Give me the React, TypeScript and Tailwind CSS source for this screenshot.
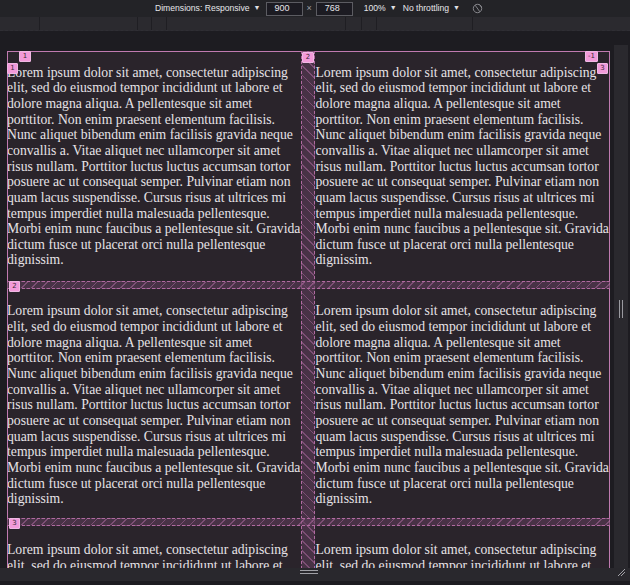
import React from 'react';

const lorem =
  'Lorem ipsum dolor sit amet, consectetur adipiscing elit, sed do eiusmod tempor incididunt ut labore et dolore magna aliqua. A pellentesque sit amet porttitor. Non enim praesent elementum facilisis. Nunc aliquet bibendum enim facilisis gravida neque convallis a. Vitae aliquet nec ullamcorper sit amet risus nullam. Porttitor luctus luctus accumsan tortor posuere ac ut consequat semper. Pulvinar etiam non quam lacus suspendisse. Cursus risus at ultrices mi tempus imperdiet nulla malesuada pellentesque. Morbi enim nunc faucibus a pellentesque sit. Gravida dictum fusce ut placerat orci nulla pellentesque dignissim.';

function Caret() {
  return <span className="ml-[4px] text-[7px] text-[#e0e0e4]">▼</span>;
}

function Label({ text, cls }: { text: string; cls: string }) {
  return (
    <div
      className={`absolute z-20 flex h-[11px] items-center justify-center rounded-[1px] border border-[#f0b8e4] bg-[#f29ad9] px-[2px] font-['DejaVu_Sans',sans-serif] text-[7px] leading-none text-[#3a2a36] ${cls}`}
    >
      {text}
    </div>
  );
}

export default function App() {
  const rulerStops = [39, 137, 151, 166, 345, 361, 376, 472];
  return (
    <div className="relative h-[585px] w-[630px] overflow-hidden bg-[#1d1c21] font-['Liberation_Sans',sans-serif]">
      {/* toolbar */}
      <div className="flex h-[17px] items-center bg-[#232327] text-[8.6px] text-[#e6e6ea]">
        <div className="ml-[155px] flex items-center">
          Dimensions: Responsive
          <Caret />
        </div>
        <div className="ml-[5px] flex h-[14px] w-[37px] items-center border border-[#5c5c62] bg-[#1c1b22] pl-[8px] text-[9px]">900</div>
        <span className="mx-[4px] text-[9px] text-[#a0a0a6]">×</span>
        <div className="flex h-[14px] w-[37px] items-center border border-[#5c5c62] bg-[#1c1b22] pl-[8px] text-[9px]">768</div>
        <div className="ml-[11px] flex items-center">
          100%
          <Caret />
        </div>
        <div className="ml-[6px] flex items-center">
          No throttling
          <Caret />
        </div>
        <svg className="ml-[12px]" width="11" height="11" viewBox="0 0 12 12" fill="none" stroke="#8e8e94" strokeWidth="1">
          <circle cx="6" cy="6" r="4.6" />
          <path d="M3.4 2.4 L8.6 9.6" />
          <path d="M8 1.8 A4.6 4.6 0 0 1 10.4 5" />
        </svg>
      </div>
      {/* media query ruler */}
      <div className="relative h-[14px] border-b border-dashed border-[#2f2e34] bg-[#2b2a2f]">
        {rulerStops.map(x => (
          <div key={x} className="absolute top-0 h-full w-px bg-[#1f1e23]" style={{ left: x }} />
        ))}
      </div>
      {/* side strip */}
      <div className="absolute right-[2px] top-[45px] flex h-[527px] w-[14px] items-center justify-center bg-[#2a292e]">
        <div className="flex h-[18px] gap-[2px]">
          <div className="w-px bg-[#9a9aa0]" />
          <div className="w-px bg-[#9a9aa0]" />
        </div>
      </div>
      {/* viewport */}
      <div className="ml-[7px] mt-[20px] h-[517px] w-[603px] overflow-hidden bg-[#2a242b]">
        <div className="relative grid grid-cols-2 gap-x-[14px] gap-y-[8px] font-['Liberation_Serif',serif] text-[13.7px] leading-[15.65px] text-[#e6e2e6]">
          {Array.from({ length: 6 }).map((_, i) => (
            <p key={i} className="my-[13.6px]">
              {lorem}
            </p>
          ))}
          {/* grid overlay */}
          <div className="pointer-events-none absolute inset-0 z-10 border-l border-r border-t border-[#c07ab0]" />
          <div className="pointer-events-none absolute bottom-0 left-[294px] top-0 z-10 w-[14px] border-l border-r border-dashed border-[#b06aa0] bg-[#5e3c58]/60 bg-[repeating-linear-gradient(45deg,rgba(220,130,200,0.35)_0_1px,transparent_1px_7px)]" />
          <div className="pointer-events-none absolute left-0 right-0 top-[230px] z-10 h-[8px] border-b border-t border-dashed border-[#b06aa0] bg-[#5e3c58]/60 bg-[repeating-linear-gradient(135deg,rgba(220,130,200,0.35)_0_1px,transparent_1px_7px)]" />
          <div className="pointer-events-none absolute left-0 right-0 top-[467px] z-10 h-[8px] border-b border-t border-dashed border-[#b06aa0] bg-[#5e3c58]/60 bg-[repeating-linear-gradient(135deg,rgba(220,130,200,0.35)_0_1px,transparent_1px_7px)]" />
          <Label text="1" cls="left-[12px] top-0 w-[12px]" />
          <Label text="1" cls="left-0 top-[12px] w-[11px]" />
          <Label text="2" cls="left-[295px] top-[1px] w-[12px]" />
          <Label text="-1" cls="left-[578px] top-0 w-[13px]" />
          <Label text="3" cls="left-[590px] top-[12px] w-[11px]" />
          <Label text="2" cls="left-[2px] top-[230px] w-[11px]" />
          <Label text="3" cls="left-[2px] top-[467px] w-[11px]" />
        </div>
      </div>
      {/* bottom bar */}
      <div className="relative h-[13px] bg-[#29282d]">
        <div className="absolute left-[300px] top-[2px] flex w-[18px] flex-col gap-[2px]">
          <div className="h-px bg-[#a0a0a6]" />
          <div className="h-px bg-[#a0a0a6]" />
        </div>
        <svg className="absolute right-[4px] top-0" width="9" height="9" viewBox="0 0 9 9" stroke="#a0a0a6" strokeWidth="1">
          <path d="M1 8 L8 1" />
          <path d="M4 8 L8 4" />
        </svg>
      </div>
    </div>
  );
}
